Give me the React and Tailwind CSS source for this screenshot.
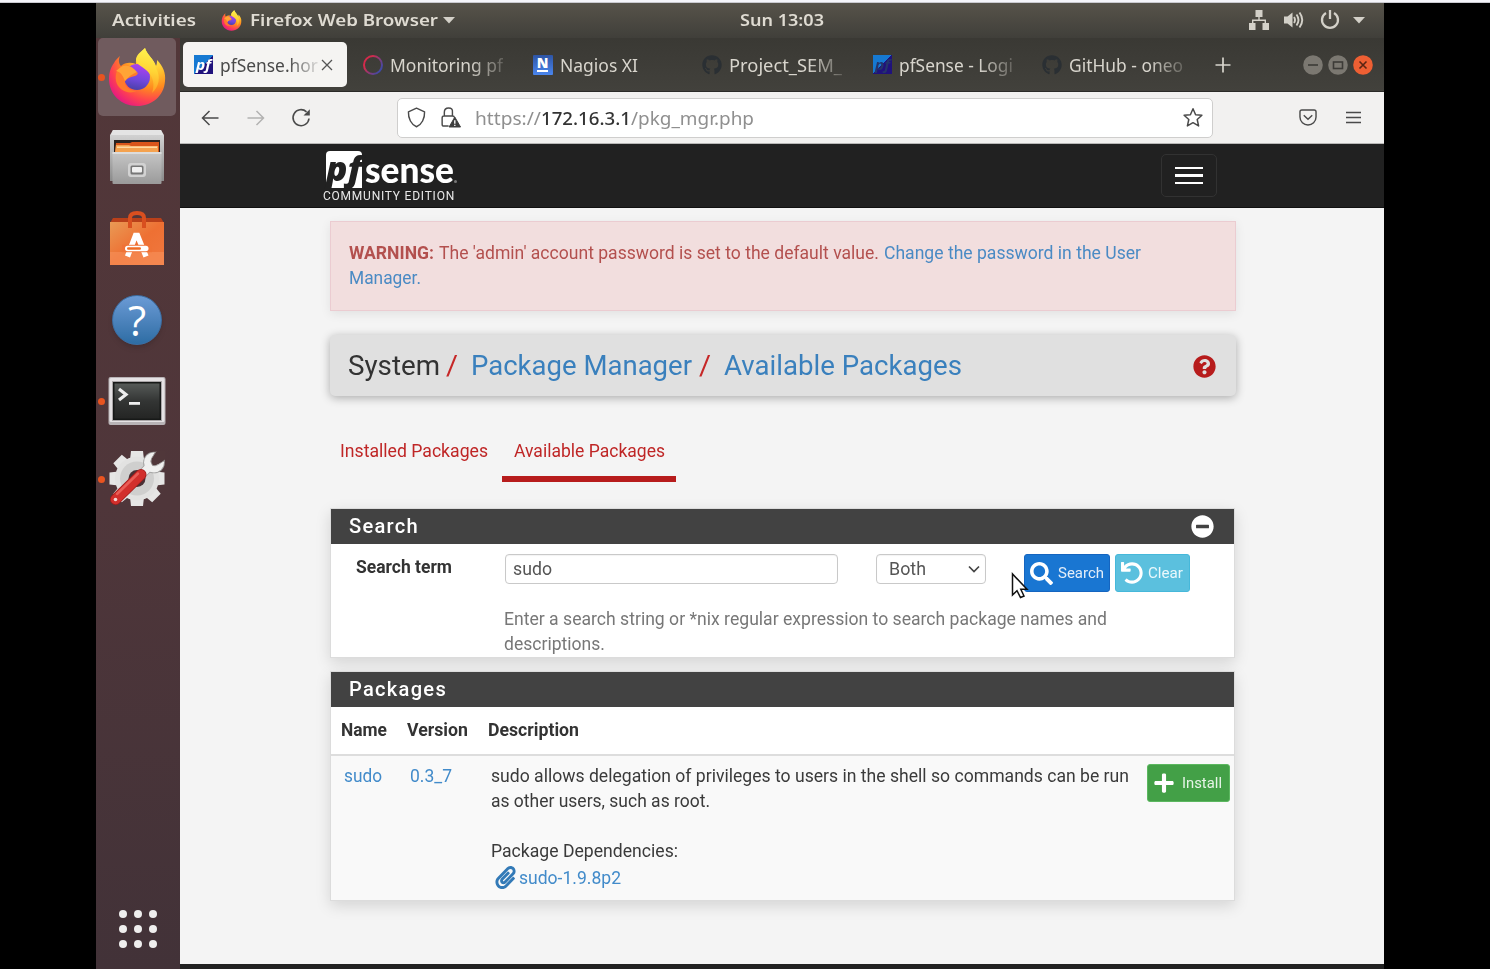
import { useLayoutEffect, useRef } from "react";
import { FaSearch, FaUndo, FaPlus, FaPaperclip, FaQuestionCircle, FaMinusCircle, FaGithub } from "react-icons/fa";

// One line of text that is condensed or expanded to the given width.
function Fit({ w, className = "", children }) {
  const ref = useRef(null);
  useLayoutEffect(() => {
    const el = ref.current;
    el.style.transform = "none";
    const natural = el.getBoundingClientRect().width;
    if (natural > 0) el.style.transform = `scaleX(${w / natural})`;
  }, [w, children]);
  return (
    <span className={`inline-block shrink-0 whitespace-pre ${className}`} style={{ width: w }}>
      <span ref={ref} className="inline-block origin-left">{children}</span>
    </span>
  );
}

function Firefox({ id, className }) {
  return (
    <svg viewBox="0 0 58 60" className={className}>
      <defs>
        <radialGradient id={`${id}a`} cx="0.78" cy="0.15" r="0.98">
          <stop offset="0" stopColor="#fff44f" />
          <stop offset="0.3" stopColor="#ffc12e" />
          <stop offset="0.55" stopColor="#ff8a1e" />
          <stop offset="0.78" stopColor="#ff4250" />
          <stop offset="1" stopColor="#e31587" />
        </radialGradient>
        <linearGradient id={`${id}b`} x1="0.6" y1="0" x2="0.4" y2="1">
          <stop offset="0" stopColor="#b040f0" />
          <stop offset="0.6" stopColor="#7048dc" />
          <stop offset="1" stopColor="#4a40a8" />
        </linearGradient>
        <linearGradient id={`${id}c`} x1="0.6" y1="0" x2="0.5" y2="1">
          <stop offset="0" stopColor="#fff44f" />
          <stop offset="0.5" stopColor="#ffd536" />
          <stop offset="1" stopColor="#ff9a24" />
        </linearGradient>
      </defs>
      <path d="M12 9 C10 13 11 17 13 19 C17 15 23 15 28 17 C27 10 32 6 37 1 C39 8 46 12 48 19 C49 17 49 15 49 13 C55 19 58 26 57 34 C56 49 44 59 29 59 C13 59 1 47 1 32 C1 25 3 20 6 16 C7 13 10 11 12 9Z" fill={`url(#${id}a)`} />
      <circle cx="29" cy="30" r="13" fill={`url(#${id}b)`} />
      <path d="M37 1 C39 8 47 13 48 21 C53 30 51 40 44 46 C47 38 45 30 41 26 C37 20 27 18 28 12 C29 7 34 4 37 1Z" fill={`url(#${id}c)`} />
      <path d="M13 20 C18 17 24 18 28 25 C31 25 30 28 27 29 C23 30 19 31 17 34 C16 39 22 44 29 44 C20 48 10 43 8 34 C7 27 9 22 13 20Z" fill="#ff7a2c" />
      <path d="M13 20 C18 17 24 19 29 25 C24 27 20 30 17 34 C15 29 13 25 8 24Z" fill="#ffa436" />
    </svg>
  );
}

function Files() {
  return (
    <svg viewBox="0 0 54 56" className="h-14 w-[54px]">
      <defs>
        <linearGradient id="fl1" x1="0" y1="0" x2="0" y2="1"><stop offset="0" stopColor="#d9d9d9" /><stop offset="1" stopColor="#8b8b8b" /></linearGradient>
        <linearGradient id="fl2" x1="0" y1="0" x2="0" y2="1"><stop offset="0" stopColor="#c6c6c6" /><stop offset="1" stopColor="#9a9a9a" /></linearGradient>
      </defs>
      <path d="M3 1 H51 L54 6 V52 H0 V6Z" fill="url(#fl1)" />
      <path d="M3 1 H51 L53 6 H1Z" fill="#e4e4e4" />
      <rect x="4" y="11" width="46" height="13" fill="#2b2421" />
      <path d="M6 14 L20 14 L22 13 H49 V24 H5Z" fill="#d9551b" />
      <path d="M6 16 H19 L21 17 H48 V24 H5Z" fill="#f4a24f" />
      <rect x="7" y="17.500" width="40" height="1.500" fill="#ffd9a3" />
      <rect x="2.500" y="23" width="49" height="32" rx="1" fill="url(#fl2)" />
      <rect x="2.500" y="23" width="49" height="2" fill="#dcdcdc" />
      <rect x="18" y="34" width="18" height="14" rx="3" fill="#d2d2d2" />
      <rect x="20.500" y="36.500" width="13" height="9" rx="1.500" fill="#777" />
      <rect x="22" y="38" width="10" height="5.500" rx="1" fill="#f0f0f0" />
    </svg>
  );
}

function Software() {
  return (
    <svg viewBox="0 0 54 56" className="h-14 w-[54px]">
      <defs>
        <linearGradient id="sw" x1="0" y1="0" x2="1" y2="1"><stop offset="0" stopColor="#e99a55" /><stop offset="0.5" stopColor="#ee7033" /><stop offset="1" stopColor="#f0783f" /></linearGradient>
      </defs>
      <path d="M3 8 H51 L54 13 H0Z" fill="#b9401a" />
      <rect x="0" y="12" width="54" height="43" fill="url(#sw)" />
      <rect x="0" y="42" width="54" height="13" fill="#f6915c" opacity="0.6" />
      <path d="M20 18 V8 Q20 3 27 3 Q34 3 34 8 V18" fill="none" stroke="#d94f1f" strokeWidth="4" />
      <path d="M17.500 46.500 L25.500 25.500 H27.500 L36 46.500" fill="none" stroke="#fff" strokeWidth="5.400" />
      <rect x="12" y="34.800" width="30" height="7.400" fill="#ef7236" />
      <rect x="15" y="35.800" width="23.500" height="5.400" rx="2.700" fill="#fff" />
      <rect x="17" y="37.200" width="14" height="2.600" rx="1.300" fill="#ef6c24" />
    </svg>
  );
}

function Help() {
  return (
    <span className="flex h-[50px] w-[50px] items-center justify-center rounded-full border border-[#3b6ea3] bg-linear-to-b from-[#6b9bd6] to-[#2d6da4] font-['Open_Sans',sans-serif] text-[42px] leading-none font-medium text-white shadow-md">
      ?
    </span>
  );
}

function Terminal() {
  return (
    <svg viewBox="0 0 58 50" className="h-[50px] w-[58px]">
      <defs>
        <linearGradient id="tm" x1="0" y1="0" x2="0" y2="1"><stop offset="0" stopColor="#565a58" /><stop offset="0.5" stopColor="#333534" /><stop offset="1" stopColor="#242524" /></linearGradient>
      </defs>
      <rect x="0.500" y="1" width="57" height="48" rx="2" fill="#b8b3b6" />
      <rect x="1.500" y="2" width="55" height="44" rx="1.500" fill="#e5e2e4" />
      <rect x="4" y="5" width="50" height="40" fill="#a9a5a7" />
      <rect x="5" y="6" width="48" height="38" fill="#171918" />
      <rect x="6.500" y="7.500" width="45" height="35" fill="url(#tm)" />
      <path d="M11 13 L18 18.500 L11 24" fill="none" stroke="#eee" strokeWidth="3.200" />
      <rect x="21" y="26" width="11" height="2.800" fill="#eee" />
    </svg>
  );
}

const teeth = [0, 45, 90, 135, 180, 225, 270, 315];
function Settings() {
  return (
    <svg viewBox="0 0 56 58" className="h-[58px] w-14">
      {teeth.map((a) => (
        <path key={a} d="M22 1 H34 L35 10 H21Z" fill="#e6e6e5" transform={`rotate(${a} 28 28.5)`} />
      ))}
      <circle cx="28" cy="28.500" r="22" fill="#e2e2e1" />
      <circle cx="28" cy="28.500" r="17" fill="#cfcfce" />
      <circle cx="28" cy="28.500" r="8.500" fill="#4a3135" />
      <path d="M32 25 L39 18" stroke="#9f9f9e" strokeWidth="9.500" />
      <circle cx="45" cy="12.500" r="10.800" fill="#9f9f9e" />
      <circle cx="45" cy="12.500" r="10" fill="#f0f0ef" />
      <path d="M32 25 L39 18" stroke="#f0f0ef" strokeWidth="8" />
      <path d="M43.500 15.500 Q40.500 12 42.500 8.500 L47 0.500 H58 V9.500 L49.500 14 Q46 16.500 43.500 15.500Z" fill="#50373a" />
      <path d="M47 1.500 L42.500 8.500 Q41 12 43.500 15.500 Q46 16.500 49.500 14.500 L56 10" fill="none" stroke="#9f9f9e" strokeWidth="0.800" />
      <path d="M6.500 49.500 L32 24.500" stroke="#9d1d1c" strokeWidth="11" strokeLinecap="round" />
      <path d="M6.500 49.500 L32 24.500" stroke="#d22f2c" strokeWidth="9.500" strokeLinecap="round" />
      <path d="M8 44 L29 23.500" stroke="#ea5d56" strokeWidth="2.500" strokeLinecap="round" />
      <circle cx="6.500" cy="49.500" r="1.800" fill="#f3d7d5" />
    </svg>
  );
}

function DockItem({ running, active, className, children }) {
  return (
    <div className={`flex w-[78px] items-center rounded-[5px] ${active ? "bg-[#705b5e]" : ""} ${className}`}>
      <span className={`h-[7px] w-[7px] shrink-0 rounded-full ${running ? "bg-[#e95420]" : ""}`} />
      <div className="flex w-[64px] justify-center">{children}</div>
    </div>
  );
}

function PfIcon({ dark }) {
  return (
    <span className={`flex h-[19px] w-[19px] shrink-0 items-center justify-center bg-linear-to-br from-[#1679d2] from-50% to-[#20127c] to-50% font-['Open_Sans',sans-serif] text-[15px] leading-none font-bold italic ${dark ? "text-[#25346a]" : "text-white"}`}>
      <Fit w={15}>pf</Fit>
    </span>
  );
}

function Tab({ icon, w, text, fade = true, className = "" }) {
  return (
    <div className={`flex h-[45px] w-[169.700px] shrink-0 items-center gap-[7px] text-[#d8d5cd] ${className}`}>
      <span className="flex w-5 shrink-0 justify-center">{icon}</span>
      <Fit w={w} className={`leading-[26px] ${fade ? "mask-r-from-70% mask-r-to-110%" : ""}`}>{text}</Fit>
    </div>
  );
}

function TopBar() {
  return (
    <header className="flex h-[35px] shrink-0 items-center bg-linear-to-b from-[#57534a] to-[#403f3a] pb-[1px] pl-4 text-[16.500px] font-semibold text-[#dfdbd2]">
      <Fit w={84}>Activities</Fit>
      <Firefox id="ft" className="ml-[25px] h-[21px] w-[21px]" />
      <Fit w={188} className="ml-[8px]">Firefox Web Browser</Fit>
      <svg viewBox="0 0 12 7" className="ml-[5px] h-[7px] w-3"><path d="M0 0 H12 L6 6.500Z" fill="#d3d0c8" /></svg>
      <Fit w={84} className="ml-[285px]">Sun 13:03</Fit>
      <div className="ml-auto flex items-center pr-[19px]">
        <svg viewBox="0 0 20 20" className="h-5 w-5" fill="#d3d0c8"><path d="M6.500 0h7v7h-7zM0 13h6.500v7H0zM13.500 13H20v7h-6.500zM9.300 6h1.400v3.500H17v4h-1.400v-2.600H4.400v2.600H3v-4h6.300z" /></svg>
        <svg viewBox="0 0 20 20" className="ml-[15px] h-5 w-5" fill="none" stroke="#d3d0c8" strokeWidth="1.900">
          <path d="M0 6.500h3.500L8.500 2.500v15l-5-4H0z" fill="#d3d0c8" stroke="none" />
          <path d="M10 7q2 3 0 6M12.500 4.500q4 5.500 0 11M15.500 2.500q5.500 7.500 0 15" />
        </svg>
        <svg viewBox="0 0 20 20" className="ml-[16px] h-5 w-5" fill="none" stroke="#d3d0c8" strokeWidth="2.300"><path d="M6 3a8 8 0 1 0 8 0M10 0v9" /></svg>
        <svg viewBox="0 0 12 7" className="ml-[13px] h-[7px] w-3"><path d="M0 0 H12 L6 6.500Z" fill="#d3d0c8" /></svg>
      </div>
    </header>
  );
}

function Dock() {
  return (
    <aside className="flex w-[84px] shrink-0 flex-col bg-linear-to-b from-[#523739] via-[#4f363a] to-[#423238] pl-[2px]">
      <DockItem active running className="h-[78px]"><Firefox id="fd" className="h-[60px] w-[58px]" /></DockItem>
      <DockItem className="mt-[13px] h-14"><Files /></DockItem>
      <DockItem className="mt-[25px] h-14"><Software /></DockItem>
      <DockItem className="mt-[29px] h-[50px]"><Help /></DockItem>
      <DockItem running className="mt-[31px] h-[50px]"><Terminal /></DockItem>
      <DockItem running className="mt-[24px] h-[58px]"><Settings /></DockItem>
      <div className="mt-auto mb-[21px] ml-[21px] grid w-[38px] grid-cols-3 gap-x-[7px] gap-y-[7px]">
        {Array.from({ length: 9 }, (_, i) => <span key={i} className="h-2 w-2 rounded-full bg-[#efeeee]" />)}
      </div>
    </aside>
  );
}

function TabStrip() {
  return (
    <div className="flex h-[54px] shrink-0 items-center border-b border-[#2b2a27] bg-linear-to-b from-[#3a3934] to-[#42413c] pl-[3px] text-[17.500px]">
      <div className="flex h-[45px] w-[164px] shrink-0 items-center rounded-[5px] bg-[#f5f4f2] pl-[11px] text-[#4a4a4a]">
        <PfIcon />
        <Fit w={98} className="ml-[7px] mask-r-from-70% mask-r-to-105% leading-[26px]">pfSense.hor</Fit>
        <svg viewBox="0 0 12 12" className="ml-[3px] h-3 w-3" stroke="#555" strokeWidth="1.300"><path d="M1 1 11 11M11 1 1 11" /></svg>
      </div>
      <Tab className="ml-[16px]" w={113} text="Monitoring pf" icon={
        <svg viewBox="0 0 20 20" className="h-5 w-5" fill="none" strokeWidth="2">
          <defs><linearGradient id="ring" x1="0" y1="0" x2="1" y2="0.7"><stop offset="0.3" stopColor="#d42a4b" /><stop offset="1" stopColor="#3c4aa8" /></linearGradient></defs>
          <circle cx="10" cy="10" r="9" stroke="url(#ring)" />
        </svg>
      } />
      <Tab w={78} text="Nagios XI" fade={false} icon={
        <span className="flex h-5 w-5 flex-col items-center justify-center gap-[1px] rounded-[1px] bg-linear-to-b from-[#2e55a5] to-[#4a86ee] text-[14px] leading-[12px] font-black text-white">
          N
          <i className="h-[1.500px] w-[11px] bg-white" />
        </span>
      } />
      <Tab w={113} text="Project_SEM_" icon={<FaGithub className="h-5 w-5 text-[#2a2f33]" />} />
      <Tab w={114} text="pfSense - Logi" icon={<PfIcon dark />} />
      <Tab w={114} text="GitHub - oneo" icon={<FaGithub className="h-5 w-5 text-[#2a2f33]" />} />
      <svg viewBox="0 0 16 16" className="ml-[4px] h-4 w-4 shrink-0" stroke="#d8d5cd" strokeWidth="1.700"><path d="M8 0.500V15.500M0.500 8H15.500" /></svg>
      <div className="ml-auto flex gap-[5px] pr-[11px]">
        <svg viewBox="0 0 20 20" className="h-5 w-5"><circle cx="10" cy="10" r="9.800" fill="#7b7871" /><path d="M5 10H15" stroke="#3c3b37" strokeWidth="1.600" /></svg>
        <svg viewBox="0 0 20 20" className="h-5 w-5"><circle cx="10" cy="10" r="9.800" fill="#7b7871" /><rect x="5.500" y="7" width="9" height="6.500" fill="none" stroke="#3c3b37" strokeWidth="1.600" /></svg>
        <svg viewBox="0 0 20 20" className="h-5 w-5"><circle cx="10" cy="10" r="9.800" fill="#ee5f33" /><path d="M6.500 6.500 13.500 13.500M13.500 6.500 6.500 13.500" stroke="#5a2413" strokeWidth="1.600" /></svg>
      </div>
    </div>
  );
}

function Toolbar() {
  return (
    <div className="flex h-[52px] shrink-0 items-center border-b border-[#b9b8b7] bg-[#f2f1f0] pl-[21px] text-[#4a4a4a]">
      <svg viewBox="0 0 18 16" className="h-4 w-[18px]" fill="none" stroke="#4a4a4a" strokeWidth="1.500"><path d="M17.500 8H1.500M8.500 1 1.500 8l7 7" /></svg>
      <svg viewBox="0 0 18 16" className="ml-[28px] h-4 w-[18px]" fill="none" stroke="#b3b2b1" strokeWidth="1.500"><path d="M.5 8h16M9.500 1l7 7-7 7" /></svg>
      <svg viewBox="0 0 20 20" className="ml-[26px] h-5 w-5" fill="none" stroke="#4a4a4a" strokeWidth="1.600"><path d="M15.500 3.800A8 8 0 1 0 18 10.500" /><path d="M18.800 1.200V7.500H12.500Z" fill="#4a4a4a" stroke="none" /></svg>
      <div className="ml-[86px] flex h-[40px] w-[816px] shrink-0 items-center rounded-[5px] border border-[#cfcecd] bg-white pr-[10px] pl-[9px]">
        <svg viewBox="0 0 20 22" className="h-[21px] w-[19px]" fill="none" stroke="#4a4a4a" strokeWidth="1.500"><path d="M10 1.200 L18.500 5 C18.800 12 15.500 18.500 10 20.700 C4.500 18.500 1.200 12 1.500 5Z" strokeLinejoin="round" /></svg>
        <svg viewBox="0 0 21 22" className="ml-[15px] h-[21px] w-5" fill="none" stroke="#4a4a4a" strokeWidth="1.500">
          <path d="M8 20H3Q1.200 20 1.200 18V11.500Q1.200 9.500 3 9.500H12Q14 9.500 14 11M3.500 9.500V5.500Q3.500 1 8 1T12 5.500V9.500" />
          <path d="M14.500 10.500 L20.500 21H8.500Z" fill="#3d3d3d" stroke="#3d3d3d" strokeWidth="1" strokeLinejoin="round" />
          <path d="M14.500 14v3.500M14.500 18.600v1.200" stroke="#fff" strokeWidth="1.400" />
        </svg>
        <div className="ml-[14px] flex text-[17.500px] leading-[26px] text-[#8f8f8f]">
          <Fit w={66}>https://</Fit>
          <Fit w={90} className="font-medium text-[#333]">172.16.3.1</Fit>
          <Fit w={123}>/pkg_mgr.php</Fit>
        </div>
        <svg viewBox="0 0 22 22" className="mr-[-2px] ml-auto h-[22px] w-[22px]" fill="none" stroke="#4a4a4a" strokeWidth="1.500" strokeLinejoin="round"><path d="M11 1.800l2.600 5.900 6.300.6-4.700 4.200 1.400 6.400L11 15.700l-5.600 3.200 1.400-6.400L2.100 8.300l6.300-.6z" /></svg>
      </div>
      <svg viewBox="0 0 19 18" className="ml-[86px] h-[17px] w-[18px]" fill="none" stroke="#4a4a4a" strokeWidth="1.500"><path d="M3 1H16Q18 1 18 3V8.500C18 13.500 14 17 9.500 17S1 13.500 1 8.500V3Q1 1 3 1Z" /><path d="M5 6.500l4.500 4.300L14 6.500" /></svg>
      <svg viewBox="0 0 15 14" className="ml-[29px] h-[14px] w-[15px]" stroke="#4a4a4a" strokeWidth="1.500"><path d="M0 1.500H15M0 6.500H15M0 11.500H15" /></svg>
    </div>
  );
}

function Navbar() {
  return (
    <nav className="flex h-[64px] shrink-0 justify-between border-b border-[#111] bg-[#212121] pr-[167px] pl-[143px]">
      <div className="flex flex-col pt-[7px]">
        <div className="ml-[3px] flex h-[37px] items-start text-white">
          <span className="flex h-[37px] w-[36px] items-center rounded-t-[4px] bg-white font-['Open_Sans',sans-serif] text-[34px] leading-none font-extrabold text-[#212121] italic">
            <Fit w={36} className="-mt-[3px] leading-[37px]">pf</Fit>
          </span>
          <Fit w={89} className="ml-[3px] font-['Lato',sans-serif] text-[36px] leading-[36px] font-black">sense</Fit>
          <span className="mt-[29px] h-[3px] w-[3px] rounded-full bg-[#777]" />
        </div>
        <Fit w={132} className="font-['Roboto',sans-serif] text-[12.500px] leading-[16px] tracking-[0.800px] text-[#e8e8e8]">COMMUNITY EDITION</Fit>
      </div>
      <span className="mt-[10px] flex h-[43px] w-[56px] flex-col items-center justify-center gap-[5px] rounded-[5px] border border-[#323232]">
        <i className="h-[2.500px] w-7 bg-white" /><i className="h-[2.500px] w-7 bg-white" /><i className="h-[2.500px] w-7 bg-white" />
      </span>
    </nav>
  );
}

function Panel({ title, action, className, children }) {
  return (
    <section className={`w-[905px] border border-[#dcdcdc] bg-white shadow-[0_5px_14px_rgba(0,0,0,0.13)] ${className}`}>
      <div className="flex h-[35px] items-center justify-between bg-[#424242] pr-[20px] pl-[18px] text-[20px] font-medium text-white">
        {title}
        {action}
      </div>
      {children}
    </section>
  );
}

function SearchPanel() {
  return (
    <Panel
      className="mt-[26px] h-[150px]"
      title={<Fit w={70} className="tracking-[1.250px]">Search</Fit>}
      action={<FaMinusCircle className="h-[23px] w-[23px]" />}
    >
      <div className="flex items-start pt-[10px]">
        <Fit w={96} className="mt-[1px] ml-[25px] font-bold">Search term</Fit>
        <div className="ml-[53px] h-[30px] w-[333px] rounded-[4px] border border-[#c9c9c9] pl-[7px] leading-[28px] text-[#555] inset-shadow-xs">
          <Fit w={39}>sudo</Fit>
        </div>
        <div className="ml-[38px] flex h-[30px] w-[110px] items-center rounded-[4px] border border-[#c9c9c9] pl-[12px] leading-[28px] text-[#555] inset-shadow-xs">
          <Fit w={37}>Both</Fit>
          <svg viewBox="0 0 12 8" className="ml-[42px] h-2 w-3" fill="none" stroke="#444" strokeWidth="1.700"><path d="M1 1.500l5 5 5-5" /></svg>
        </div>
        <span className="relative ml-[38px] flex h-[38px] w-[86px] items-center rounded-[3px] border border-[#1565c0] bg-[#1976d2] pl-[5px] text-[15.500px] text-[#e3edf8]">
          <FaSearch className="h-[23px] w-[23px] text-white" />
          <Fit w={46} className="ml-[5px]">Search</Fit>
          <svg viewBox="0 0 18 27" className="absolute top-[17px] -left-[14px] h-[27px] w-[18px]"><path d="M1.500 2 V23 L6 18.700 L9.500 25.500 L13 24 L9.800 17.300 H16Z" fill="#fff" stroke="#111" strokeWidth="1.500" /></svg>
        </span>
        <span className="ml-[5px] flex h-[38px] w-[75px] items-center rounded-[3px] border border-[#46b8da] bg-[#5bc0de] pl-[5px] text-[15.500px] text-[#eaf8fc]">
          <FaUndo className="h-[22px] w-[22px] text-white" />
          <Fit w={35} className="ml-[5px]">Clear</Fit>
        </span>
      </div>
      <div className="mt-[15px] ml-[173px] flex flex-col text-[#777]">
        <Fit w={603}>Enter a search string or *nix regular expression to search package names and</Fit>
        <Fit w={101}>descriptions.</Fit>
      </div>
    </Panel>
  );
}

function PackagesPanel() {
  return (
    <Panel className="mt-[13px] h-[230px]" title={<Fit w={98} className="tracking-[1.250px]">Packages</Fit>}>
      <div className="flex h-[49px] items-center border-b-2 border-[#ddd] pb-[1px] pl-[10px] font-bold">
        <Fit w={46}>Name</Fit>
        <Fit w={61} className="ml-[20px]">Version</Fit>
        <Fit w={91} className="ml-[20px]">Description</Fit>
      </div>
      <div className="flex h-[144px] items-start bg-[#f9f9f9] pt-[8px] pl-[13px] text-[#3a3a3a]">
        <Fit w={38} className="text-[#428bca]">sudo</Fit>
        <Fit w={42} className="ml-[28px] text-[#428bca]">0.3_7</Fit>
        <div className="ml-[39px] flex w-[638px] flex-col">
          <Fit w={638}>sudo allows delegation of privileges to users in the shell so commands can be run</Fit>
          <Fit w={219}>as other users, such as root.</Fit>
          <Fit w={187} className="mt-[25px]">Package Dependencies:</Fit>
          <div className="mt-[2px] ml-[4px] flex items-center text-[#428bca]">
            <FaPaperclip className="-mt-[2px] h-[23px] w-[21px] text-[#337ab7]" />
            <Fit w={102} className="ml-[3px]">sudo-1.9.8p2</Fit>
          </div>
        </div>
        <span className="ml-[18px] flex h-[38px] w-[83px] shrink-0 items-center rounded-[3px] border border-[#5cb860] bg-[#43a047] pl-[6px] text-[15.500px] text-[#e6f4e7]">
          <FaPlus className="h-[22px] w-[20px] text-white" />
          <Fit w={40} className="ml-[8px]">Install</Fit>
        </span>
      </div>
    </Panel>
  );
}

function Page() {
  return (
    <main className="flex grow flex-col bg-[#f4f4f4] pl-[150px] font-['Roboto',sans-serif] text-[17.600px] leading-[25px] text-[#333]">
      <div className="mt-[13px] h-[90px] w-[906px] border border-[#ebccd1] bg-[#f2dede] pt-[19px] pl-[18.400px] text-[#b3504e] shadow-[0_3px_10px_rgba(0,0,0,0.08)]">
        <div className="flex">
          <Fit w={85} className="font-bold">WARNING:</Fit>
          <Fit w={440} className="ml-[5px]">The 'admin' account password is set to the default value.</Fit>
          <Fit w={257} className="ml-[5px] text-[#4a8ac4]">Change the password in the User</Fit>
        </div>
        <Fit w={72} className="text-[#4a8ac4]">Manager.</Fit>
      </div>
      <div className="mt-[24px] flex h-[61px] w-[906px] items-center rounded-[5px] bg-[#e0e0e0] pt-[1px] pl-[18px] text-[27.700px] leading-[36px] shadow-[0_2px_10px_rgba(0,0,0,0.3)]">
        <Fit w={92} className="text-[#333]">System</Fit>
        <Fit w={12} className="ml-[6px] text-[#c62828]">/</Fit>
        <Fit w={221} className="ml-[13px] text-[#3a80bd]">Package Manager</Fit>
        <Fit w={12} className="ml-[7px] text-[#c62828]">/</Fit>
        <Fit w={238} className="ml-[13px] text-[#3a80bd]">Available Packages</Fit>
        <FaQuestionCircle className="mr-[20px] ml-auto h-[23px] w-[23px] text-[#b71c1c]" />
      </div>
      <div className="mt-[43px] flex h-[43px] text-[#bf2626]">
        <Fit w={148} className="ml-[10px]">Installed Packages</Fit>
        <div className="ml-[14px] flex h-[43px] w-[174px] justify-center border-b-6 border-[#b71c1c]">
          <Fit w={151}>Available Packages</Fit>
        </div>
      </div>
      <SearchPanel />
      <PackagesPanel />
    </main>
  );
}

export default function App() {
  return (
    <div className="flex h-[969px] w-[1490px] flex-col overflow-hidden bg-black font-['Noto_Sans',sans-serif]">
      <div className="h-[3px] shrink-0 border-b border-[#c9c9cf] bg-[#f5f5fa]" />
      <div className="ml-[96px] flex w-[1288px] grow flex-col">
        <TopBar />
        <div className="flex grow">
          <Dock />
          <div className="flex w-[1204px] flex-col">
            <TabStrip />
            <Toolbar />
            <Navbar />
            <Page />
            <div className="h-[5px] shrink-0 bg-[#212121]" />
          </div>
        </div>
      </div>
    </div>
  );
}
